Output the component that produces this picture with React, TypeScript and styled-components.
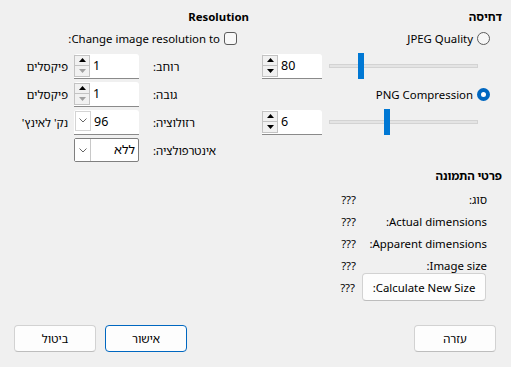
import React from "react";
import styled, { createGlobalStyle, css } from "styled-components";

const Global = createGlobalStyle`
  html, body { margin: 0; padding: 0; background: #f0f0f0; }
  body {
    font-family: "Noto Sans", "Noto Sans Hebrew", "Liberation Sans", sans-serif;
    font-size: 11.4px;
    color: #000;
  }
`;

const Page = styled.div`
  direction: rtl;
  width: 511px;
  height: 367px;
  box-sizing: border-box;
  padding: 0 9px 15px 8px;
  display: flex;
  flex-direction: column;
`;

const Columns = styled.div`
  display: grid;
  grid-template-columns: 246px 241px;
  column-gap: 7px;
  align-items: start;
`;

const Column = styled.section`
  display: flex;
  flex-direction: column;
`;

const SectionTitle = styled.div<{ $top?: number }>`
  box-sizing: border-box;
  height: ${(p) => (p.$top ? 20 : 24)}px;
  padding-top: ${(p) => (p.$top ? 0 : 9)}px;
  margin-top: ${(p) => p.$top ?? 0}px;
  line-height: 16px;
  font-weight: 700;
`;

const OptionRow = styled.label`
  height: 28px;
  display: flex;
  align-items: center;
  gap: 4px;
  padding-inline-start: 12px;
`;

const Radio = styled.span<{ $checked?: boolean }>`
  width: 13px;
  height: 13px;
  box-sizing: border-box;
  border-radius: 50%;
  flex: none;
  ${(p) =>
    p.$checked
      ? css`
          background: #fff;
          border: 4px solid #0067c0;
        `
      : css`
          background: #f6f6f6;
          border: 1px solid #5c5c5c;
        `}
`;

const Checkbox = styled.span`
  width: 13px;
  height: 13px;
  box-sizing: border-box;
  border: 1px solid #5c5c5c;
  border-radius: 3px;
  background: #f8f8f8;
  flex: none;
`;

const SliderRow = styled.div`
  height: 28px;
  display: flex;
  align-items: center;
  gap: 7px;
  padding-inline-start: 24px;
`;

const Track = styled.div`
  position: relative;
  width: 149px;
  height: 26px;
  &::before {
    content: "";
    position: absolute;
    left: 0;
    right: 0;
    top: 11px;
    height: 4px;
    box-sizing: border-box;
    background: #e4e4e4;
    border: 1px solid #d3d3d3;
  }
`;

const Thumb = styled.div`
  position: absolute;
  top: 0;
  width: 6px;
  height: 26px;
  background: #0078d4;
`;

const Field = styled.div<{ $w: number; $framed?: boolean }>`
  direction: ltr;
  width: ${(p) => p.$w}px;
  height: 25px;
  box-sizing: border-box;
  background: #fff;
  display: flex;
  align-items: stretch;
  ${(p) =>
    p.$framed
      ? css`
          border: 1px solid #7f7f7f;
          border-radius: 2px;
          height: 24px;
        `
      : css`
          border-bottom: 1px solid #8a8a8a;
          border-radius: 3px 3px 0 0;
        `}
`;

const SpinButtons = styled.div`
  width: 16px;
  display: flex;
  flex-direction: column;
  padding: 1px 0 1px 0;
  box-sizing: border-box;
`;

const SpinButton = styled.span`
  flex: 1;
  display: flex;
  align-items: center;
  justify-content: center;
  background: #f1f1f1;
  border: 1px solid #c3c3c3;
  & + & {
    border-top: none;
  }
`;

const DropButton = styled.span<{ $framed?: boolean }>`
  width: 16px;
  display: flex;
  align-items: center;
  justify-content: center;
  box-sizing: border-box;
  background: #fff;
  ${(p) =>
    p.$framed
      ? css`
          border-right: 1px solid #c8c8c8;
        `
      : css`
          border: 1px solid #d4d4d4;
          margin: 1px 0 3px 1px;
        `}
`;

const FieldText = styled.span<{ $align?: "left" | "right" }>`
  flex: 1;
  align-self: center;
  text-align: ${(p) => p.$align ?? "left"};
  padding: 0 3px;
  line-height: 16px;
  font-size: 12.5px;
  direction: ${(p) => ((p.$align ?? "left") === "left" ? "ltr" : "rtl")};
`;

const FieldRow = styled.div`
  height: 28px;
  display: grid;
  grid-template-columns: 94px 65px 66px;
  align-items: center;
  padding-inline-start: 16px;
`;

const FieldLabel = styled.span`
  text-align: left;
  padding-left: 14px;
`;

const Unit = styled.span`
  text-align: right;
  padding-right: 6px;
  white-space: nowrap;
`;

const DetailGrid = styled.div`
  display: grid;
  grid-template-columns: 124px auto;
  grid-auto-rows: 22px;
  column-gap: 7px;
  align-items: center;
  padding-inline-start: 15px;
`;

const DetailLabel = styled.span`
  text-align: right;
`;

const DetailValue = styled.span`
  text-align: right;
`;

const DetailButtonRow = styled.div`
  grid-column: 1 / -1;
  height: 32px;
  display: grid;
  grid-template-columns: 124px auto;
  column-gap: 7px;
  align-items: center;
  margin-inline-start: 1px;
`;

const Button = styled.button<{ $primary?: boolean; $w?: number; $h?: number }>`
  font: inherit;
  color: #000;
  width: ${(p) => p.$w ?? 82}px;
  height: ${(p) => p.$h ?? 27}px;
  padding: 0;
  background: #fdfdfd;
  border: 1px solid ${(p) => (p.$primary ? "#0067c0" : "#d2d2d2")};
  border-radius: 4px;
  ${(p) =>
    !p.$primary &&
    css`
      border-bottom-color: #bdbdbd;
    `}
`;

const Footer = styled.div`
  margin-top: auto;
  display: flex;
  justify-content: space-between;
  padding: 0 6px;
`;

const ButtonGroup = styled.div`
  display: flex;
  gap: 9px;
`;

const Arrow = ({ dir, disabled }: { dir: "up" | "down"; disabled?: boolean }) => (
  <svg width="7" height="4" viewBox="0 0 7 4">
    <polygon
      points={dir === "up" ? "0,4 3.5,0 7,4" : "0,0 7,0 3.5,4"}
      fill={disabled ? "#a0a0a0" : "#000"}
    />
  </svg>
);

const Chevron = () => (
  <svg width="8" height="5" viewBox="0 0 8 5">
    <polyline points="0.5,0.5 4,4 7.5,0.5" fill="none" stroke="#666" strokeWidth="1" />
  </svg>
);

const Spin = ({ value, w, atMin }: { value: string; w: number; atMin?: boolean }) => (
  <Field $w={w}>
    <SpinButtons>
      <SpinButton>
        <Arrow dir="up" />
      </SpinButton>
      <SpinButton>
        <Arrow dir="down" disabled={atMin} />
      </SpinButton>
    </SpinButtons>
    <FieldText>{value}</FieldText>
  </Field>
);

const Combo = ({ value, framed }: { value: string; framed?: boolean }) => (
  <Field $w={65} $framed={framed}>
    <DropButton $framed={framed}>
      <Chevron />
    </DropButton>
    <FieldText $align={framed ? "right" : "left"}>{value}</FieldText>
  </Field>
);

const Slider = ({ value, max }: { value: number; max: number }) => (
  <Track>
    <Thumb style={{ left: `${3 + (1 - value / max) * 130}px` }} />
  </Track>
);

const details: [string, string][] = [
  ["סוג:", "???"],
  ["Actual dimensions:", "???"],
  ["Apparent dimensions:", "???"],
  ["Image size:", "???"],
];

export default function App() {
  return (
    <>
      <Global />
      <Page>
        <Columns>
          <Column>
            <SectionTitle>דחיסה</SectionTitle>
            <OptionRow>
              <Radio />
              <span>JPEG Quality</span>
            </OptionRow>
            <SliderRow>
              <Slider value={80} max={100} />
              <Spin value="80" w={60} />
            </SliderRow>
            <OptionRow>
              <Radio $checked />
              <span>PNG Compression</span>
            </OptionRow>
            <SliderRow>
              <Slider value={6} max={10} />
              <Spin value="6" w={60} />
            </SliderRow>

            <SectionTitle $top={32}>פרטי התמונה</SectionTitle>
            <DetailGrid>
              {details.map(([label, value]) => (
                <React.Fragment key={label}>
                  <DetailLabel>{label}</DetailLabel>
                  <DetailValue>{value}</DetailValue>
                </React.Fragment>
              ))}
              <DetailButtonRow>
                <Button $w={124} $h={28}>
                  Calculate New Size:
                </Button>
                <DetailValue>???</DetailValue>
              </DetailButtonRow>
            </DetailGrid>
          </Column>

          <Column>
            <SectionTitle>Resolution</SectionTitle>
            <OptionRow>
              <Checkbox />
              <span>Change image resolution to:</span>
            </OptionRow>
            <FieldRow>
              <FieldLabel>רוחב:</FieldLabel>
              <Spin value="1" w={65} atMin />
              <Unit>פיקסלים</Unit>
            </FieldRow>
            <FieldRow>
              <FieldLabel>גובה:</FieldLabel>
              <Spin value="1" w={65} atMin />
              <Unit>פיקסלים</Unit>
            </FieldRow>
            <FieldRow>
              <FieldLabel>רזולוציה:</FieldLabel>
              <Combo value="96" />
              <Unit>נק' לאינץ'</Unit>
            </FieldRow>
            <FieldRow>
              <FieldLabel>אינטרפולציה:</FieldLabel>
              <Combo value="ללא" framed />
              <Unit />
            </FieldRow>
          </Column>
        </Columns>

        <Footer>
          <Button>עזרה</Button>
          <ButtonGroup>
            <Button $primary>אישור</Button>
            <Button>ביטול</Button>
          </ButtonGroup>
        </Footer>
      </Page>
    </>
  );
}
